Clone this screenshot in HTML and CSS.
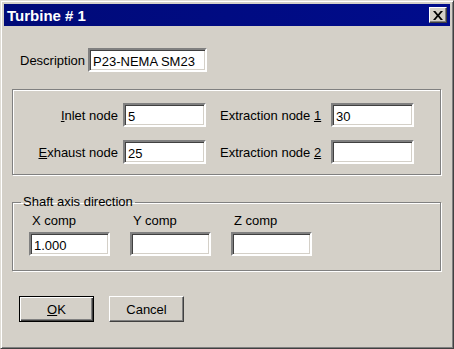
FILE: index.html
```html
<!DOCTYPE html>
<html lang="en">
<head>
  <meta charset="UTF-8">
  <title>Turbine # 1</title>
  <link rel="stylesheet" href="styles.css">
</head>
<body>
  <div class="window">
    <div class="titlebar">
      <span class="title">Turbine # 1</span>
      <button class="close-button">
        <svg width="10" height="9" viewBox="0 0 10 9"><path d="M0 0h2.3l2.7 3.2 2.7-3.2h2.3L6.2 4.5 10 9H7.7L5 5.8 2.3 9H0l3.8-4.5z" fill="#000"/></svg>
      </button>
    </div>

    <div class="dialog-body">
      <!-- Description -->
      <div class="desc-row">
        <label>Description</label>
        <input class="field desc-field" type="text" value="P23-NEMA SM23">
      </div>

      <!-- Node numbers -->
      <div class="group nodes">
        <label class="lbl-right"><u>I</u>nlet node</label>
        <input class="field" type="text" value="5">
        <label class="lbl-left">Extraction node <u>1</u></label>
        <input class="field" type="text" value="30">

        <label class="lbl-right"><u>E</u>xhaust node</label>
        <input class="field" type="text" value="25">
        <label class="lbl-left">Extraction node <u>2</u></label>
        <input class="field" type="text" value="">
      </div>

      <!-- Shaft axis -->
      <fieldset class="group shaft">
        <legend>Shaft axis direction</legend>
        <div class="comp">
          <label>X comp</label>
          <input class="field" type="text" value="1.000">
        </div>
        <div class="comp">
          <label>Y comp</label>
          <input class="field" type="text" value="">
        </div>
        <div class="comp">
          <label>Z comp</label>
          <input class="field" type="text" value="">
        </div>
      </fieldset>

      <div class="buttons">
        <button class="btn default"><u>O</u>K</button>
        <button class="btn">Cancel</button>
      </div>
    </div>
  </div>
</body>
</html>
```

FILE: styles.css
```css
body {
  margin: 0;
  padding: 0;
  font-family: "Liberation Sans", Arial, sans-serif;
  font-size: 13px;
  color: #000;
  background-color: #d4d0c8;
}
.window {
  width: 454px;
  height: 349px;
  box-sizing: border-box;
  background-color: #d4d0c8;
  border: 1px solid;
  border-color: #e0ddd6 #404040 #404040 #e0ddd6;
  box-shadow: inset 1px 1px 0 #fff, inset -1px -1px 0 #808080;
  padding: 3px;
}
.titlebar {
  height: 22px;
  background: linear-gradient(to right, #000a78, #000c8c);
  display: flex;
  align-items: center;
  justify-content: space-between;
  padding: 0 3px 0 3px;
}
.titlebar .title {
  color: #fff;
  font-weight: bold;
  font-size: 15px;
}
.close-button {
  width: 18px;
  height: 16px;
  padding: 0;
  background-color: #d4d0c8;
  border: 1px solid;
  border-color: #fff #404040 #404040 #fff;
  box-shadow: inset -1px -1px 0 #808080;
  display: flex;
  align-items: center;
  justify-content: center;
}
.dialog-body {
  padding: 22px 8px 0 8px;
}
.desc-row {
  display: flex;
  align-items: center;
  gap: 3px;
  padding-left: 8px;
}
.field {
  box-sizing: border-box;
  height: 24px;
  width: 83px;
  margin: 0;
  padding: 2px 3px 0 3px;
  font-family: "Liberation Sans", Arial, sans-serif;
  font-size: 13px;
  color: #000;
  background-color: #fff;
  border: 2px solid;
  border-color: #808080 #fff #fff #808080;
  box-shadow: inset 1px 1px 0 #404040, inset -1px -1px 0 #d4d0c8;
  outline: none;
}
.desc-row .field {
  width: 119px;
}
.group {
  border: 1px solid #808080;
  box-shadow: 1px 1px 0 #fff, inset 1px 1px 0 #fff;
  margin: 0;
}
.nodes {
  margin-top: 17px;
  width: 429px;
  height: 86px;
  box-sizing: border-box;
  padding: 13px 0 0 1px;
  display: grid;
  grid-template-columns: 104px 83px 115px 83px;
  grid-template-rows: 24px 24px;
  column-gap: 5px;
  row-gap: 13px;
  align-items: center;
}
.lbl-right {
  text-align: right;
}
.lbl-left {
  padding-left: 9px;
}
.shaft {
  margin-top: 20px;
  width: 429px;
  height: 76px;
  box-sizing: border-box;
  padding: 4px 0 0 16px;
  display: flex;
  gap: 20px;
}
.shaft legend {
  padding: 0 2px;
  margin-left: -8px;
  line-height: 14px;
}
.comp {
  display: flex;
  flex-direction: column;
  gap: 4px;
}
.comp label {
  padding-left: 3px;
}
.comp .field {
  width: 81px;
}
.buttons {
  display: flex;
  gap: 15px;
  margin-top: 25px;
  padding-left: 7px;
}
.btn {
  width: 75px;
  height: 26px;
  padding: 0;
  font-family: "Liberation Sans", Arial, sans-serif;
  font-size: 13px;
  color: #000;
  background-color: #d4d0c8;
  border: 1px solid;
  border-color: #fff #404040 #404040 #fff;
  box-shadow: inset -1px -1px 0 #808080;
}
.btn.default {
  border: 1px solid #000;
  box-shadow: inset 1px 1px 0 #fff, inset -1px -1px 0 #404040, inset -2px -2px 0 #808080;
}
```
